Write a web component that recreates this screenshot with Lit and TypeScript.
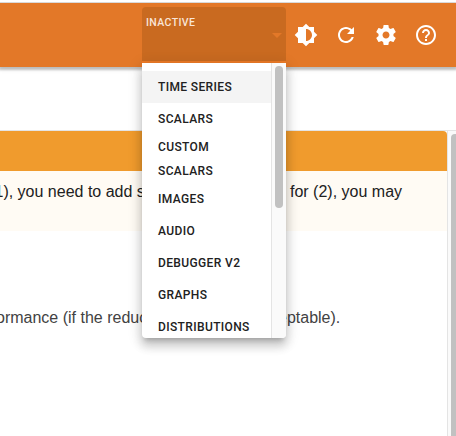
import { LitElement, html, css, svg } from "lit";
import { customElement } from "lit/decorators.js";
import { classMap } from "lit/directives/class-map.js";

const ICONS = [
  { name: "Theme", path: "M20 15.31L23.31 12 20 8.69V4h-4.69L12 .69 8.69 4H4v4.69L.69 12 4 15.31V20h4.69L12 23.31 15.31 20H20v-4.69zM12 18V6c3.31 0 6 2.69 6 6s-2.69 6-6 6z" },
  { name: "Reload", path: "M17.65 6.35C16.2 4.9 14.21 4 12 4c-4.42 0-7.99 3.58-7.99 8s3.57 8 7.99 8c3.73 0 6.84-2.55 7.73-6h-2.08c-.82 2.33-3.04 4-5.65 4-3.31 0-6-2.69-6-6s2.69-6 6-6c1.66 0 3.14.69 4.22 1.78L13 11h7V4l-2.35 2.35z" },
  { name: "Settings", path: "M19.43 12.98c.04-.32.07-.64.07-.98s-.03-.66-.07-.98l2.11-1.65c.19-.15.24-.42.12-.64l-2-3.46c-.12-.22-.39-.3-.61-.22l-2.49 1c-.52-.4-1.08-.73-1.69-.98l-.38-2.65C14.46 2.18 14.25 2 14 2h-4c-.25 0-.46.18-.49.42l-.38 2.65c-.61.25-1.17.59-1.69.98l-2.49-1c-.23-.09-.49 0-.61.22l-2 3.46c-.13.22-.07.49.12.64l2.11 1.65c-.04.32-.07.65-.07.98s.03.66.07.98l-2.11 1.65c-.19.15-.24.42-.12.64l2 3.46c.12.22.39.3.61.22l2.49-1c.52.4 1.08.73 1.69.98l.38 2.65c.03.24.24.42.49.42h4c.25 0 .46-.18.49-.42l.38-2.65c.61-.25 1.17-.59 1.69-.98l2.49 1c.23.09.49 0 .61-.22l2-3.46c.12-.22.07-.49-.12-.64l-2.11-1.65zM12 15.5c-1.93 0-3.5-1.57-3.5-3.5s1.57-3.5 3.5-3.5 3.5 1.57 3.5 3.5-1.57 3.5-3.5 3.5z" },
  { name: "Help", path: "M11 18h2v-2h-2v2zm1-16C6.48 2 2 6.48 2 12s4.48 10 10 10 10-4.48 10-10S17.52 2 12 2zm0 18c-4.41 0-8-3.59-8-8s3.59-8 8-8 8 3.59 8 8-3.59 8-8 8zm0-14c-2.21 0-4 1.79-4 4h2c0-1.1.9-2 2-2s2 .9 2 2c0 2-3 1.75-3 5h2c0-2.25 3-2.5 3-5 0-2.21-1.79-4-4-4z" },
];

const PLUGINS = ["Time Series", "Scalars", "Custom Scalars", "Images", "Audio", "Debugger V2", "Graphs", "Distributions"];

@customElement("plugin-menu")
class PluginMenu extends LitElement {
  static styles = css`
    :host {
      display: flex;
      width: 144px;
      height: 275px;
      overflow: hidden;
      background: #fff;
      border-radius: 0 0 4px 4px;
      box-shadow: 0 5px 5px -3px rgba(0, 0, 0, 0.2), 0 8px 10px 1px rgba(0, 0, 0, 0.14),
        0 3px 14px 2px rgba(0, 0, 0, 0.12);
    }
    .list {
      flex: 1;
      padding-top: 8px;
    }
    .item {
      padding: 4px 0 4px 16px;
      font: 500 12px/24px Roboto, sans-serif;
      letter-spacing: 0.37px;
      text-transform: uppercase;
      color: #212121;
      white-space: nowrap;
    }
    .item.wrapped {
      padding: 0 32px 0 16px;
      white-space: normal;
    }
    .item.active {
      background: #f4f4f4;
    }
    .track {
      box-sizing: border-box;
      width: 15px;
      padding: 3px 3px 0 3px;
      background: #fafafa;
      border-left: 1px solid #e4e4e4;
    }
    .thumb {
      width: 8px;
      height: 142px;
      border-radius: 4px;
      background: #c1c1c1;
    }
  `;

  render() {
    return html`
      <div class="list">
        ${PLUGINS.map(
          (name, i) => html`<div class=${classMap({ item: true, active: i === 0, wrapped: name === "Custom Scalars" })}>${name}</div>`
        )}
      </div>
      <div class="track"><div class="thumb"></div></div>
    `;
  }
}

@customElement("app-root")
class AppRoot extends LitElement {
  static styles = css`
    :host {
      display: flex;
      flex-direction: column;
      width: 456px;
      height: 436px;
      overflow: hidden;
      position: relative;
      background: #fff;
      font: 16px/24px "Liberation Sans", Arial, sans-serif;
    }
    .edge {
      height: 2px;
      border-bottom: 1px solid #d9d9d9;
      flex: none;
    }
    .bar {
      box-sizing: border-box;
      position: relative;
      z-index: 1;
      display: flex;
      flex: none;
      height: 64px;
      padding: 4px 18px 0 142px;
      background: #e37828;
      box-shadow: 0 2px 2px 1px rgba(0, 0, 0, 0.2), 0 1px 5px 1px rgba(0, 0, 0, 0.1);
      clip-path: inset(0 0 -400px 0);
    }
    .select {
      box-sizing: border-box;
      position: relative;
      display: flex;
      justify-content: space-between;
      width: 144px;
      height: 56px;
      padding: 9px 4px 0;
      border-bottom: 2px solid #ee7c28;
      border-radius: 4px 4px 0 0;
      background: #c96a20;
      color: #f9e5d7;
      font: 500 10.5px/14px Roboto, sans-serif;
      letter-spacing: 0.38px;
    }
    .caret {
      margin-top: 17px;
      width: 0;
      height: 0;
      border: 5px solid transparent;
      border-top-color: #e37828;
      border-bottom: 0;
    }
    .menu {
      position: absolute;
      z-index: 2;
      top: 56px;
      left: 0;
    }
    .actions {
      display: flex;
      gap: 16px;
      margin: 16px 0 0 8px;
    }
    .icon {
      width: 24px;
      height: 24px;
      fill: #fff;
    }
    .main {
      display: flex;
      flex: 1;
      margin-top: 63px;
      border-top: 1px solid #e4e4e4;
    }
    .content {
      width: 447px;
      flex: none;
    }
    .banner {
      height: 40px;
      background: #f09b2d;
      border-top-right-radius: 4px;
    }
    .line {
      display: grid;
      grid-template-columns: 290px 1fr;
      white-space: nowrap;
      overflow: hidden;
    }
    .notice {
      height: 51px;
      padding-top: 9px;
      background: #fffbf4;
      color: #212121;
    }
    .detail {
      margin-top: 75px;
      color: #424242;
    }
    .lead-one {
      margin-left: -5.5px;
    }
    .lead-two {
      margin-left: -4px;
    }
    .tail-two {
      margin-left: -12px;
    }
    .gutter {
      box-sizing: border-box;
      display: flex;
      flex: 1;
      padding: 3px 0 0 3px;
      background: #fafafa;
      border-left: 1px solid #e4e4e4;
    }
    .thumb {
      flex: 1;
      border-top-left-radius: 4px;
      background: #c1c1c1;
    }
  `;

  render() {
    return html`
      <div class="edge"></div>
      <header class="bar">
        <div class="select">
          <span>INACTIVE</span>
          <span class="caret"></span>
          <plugin-menu class="menu"></plugin-menu>
        </div>
        <div class="actions">
          ${ICONS.map(
            (icon) => html`<svg class="icon" viewBox="0 0 24 24" aria-label=${icon.name}>${svg`<path d=${icon.path}></path>`}</svg>`
          )}
        </div>
      </header>
      <main class="main">
        <div class="content">
          <div class="banner"></div>
          <div class="line notice">
            <span class="lead-one">1), you need to add s</span>
            <span>for (2), you may</span>
          </div>
          <div class="line detail">
            <span class="lead-two">ormance (if the reduc</span>
            <span class="tail-two">eptable).</span>
          </div>
        </div>
        <div class="gutter"><div class="thumb"></div></div>
      </main>
    `;
  }
}
